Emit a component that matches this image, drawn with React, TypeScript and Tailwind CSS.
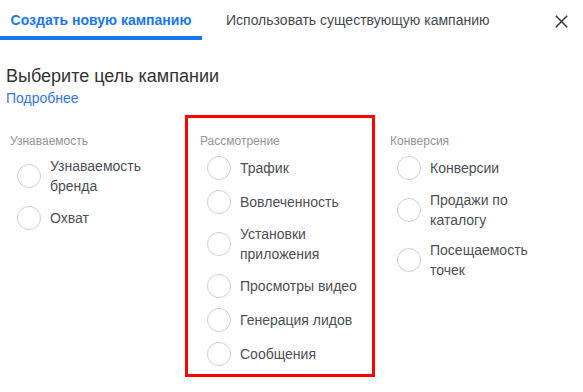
import React from "react";

type Col = { label: string; items: string[]; boxed?: boolean };

const cols: Col[] = [
  { label: "Узнаваемость", items: ["Узнаваемость бренда", "Охват"] },
  {
    label: "Рассмотрение",
    items: ["Трафик", "Вовлеченность", "Установки приложения", "Просмотры видео", "Генерация лидов", "Сообщения"],
    boxed: true,
  },
  { label: "Конверсия", items: ["Конверсии", "Продажи по каталогу", "Посещаемость точек"] },
];

function Radio({ text }: { text: string }) {
  return (
    <div className="flex items-center py-[5px]">
      <div className="ml-[7px] w-[24px] h-[24px] shrink-0 rounded-full border border-[#ccd0d5] bg-white" />
      <div className="ml-[9px] w-[125px] text-[14px] leading-[20px] text-[#4b4f56]">{text}</div>
    </div>
  );
}

export default function App() {
  return (
    <div
      className="w-[583px] h-[392px] bg-white relative overflow-hidden"
      style={{ fontFamily: '"Liberation Sans", Arial, sans-serif' }}
    >
      <div className="flex items-stretch h-[40px]">
        <div className="relative px-[12px] w-[202px] flex items-center justify-center">
          <span className="text-[14px] font-bold text-[#1877f2] whitespace-nowrap">Создать новую кампанию</span>
          <div className="absolute left-0 right-0 bottom-0 h-[4px] bg-[#1877f2]" />
        </div>
        <div className="ml-[12px] px-[12px] flex items-center">
          <span className="text-[14px] text-[#444950] whitespace-nowrap">Использовать существующую кампанию</span>
        </div>
        <div className="ml-auto mr-[15px] flex items-center mt-[2px]">
          <svg width="13" height="13" viewBox="0 0 13 13">
            <path d="M0.8 0.8 L12.2 12.2 M12.2 0.8 L0.8 12.2" stroke="#333" strokeWidth="1.5" fill="none" />
          </svg>
        </div>
      </div>

      <div className="pl-[6px] pt-[25px]">
        <div className="text-[18px] leading-[22px] text-[#333]">Выберите цель кампании</div>
        <div className="text-[14px] leading-[18px] text-[#3578e5] mt-[2px]">Подробнее</div>
      </div>

      <div className="flex pl-[10px] mt-[26px]">
        {cols.map((c) => (
          <div key={c.label} className="relative w-[190px]">
            {c.boxed && (
              <div className="absolute -left-[15px] -top-[18px] -bottom-[6px] w-[190px] border-[3px] border-[#ff0000] pointer-events-none" />
            )}
            <div className="text-[12px] leading-[16px] text-[#90949c] mb-[2px]">{c.label}</div>
            {c.items.map((it) => (
              <Radio key={it} text={it} />
            ))}
          </div>
        ))}
      </div>
    </div>
  );
}
